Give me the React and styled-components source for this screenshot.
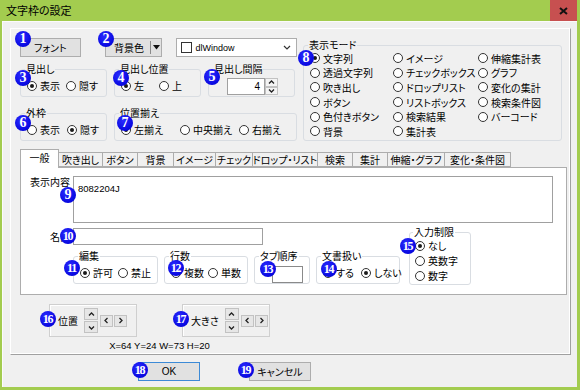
import React from "react";
import styled, { createGlobalStyle } from "styled-components";

const GlobalStyle = createGlobalStyle`
  html, body { margin:0; padding:0; }
  body {
    width:580px; height:390px; overflow:hidden;
    font-family:"Noto Sans CJK JP", "Noto Sans", sans-serif;
    font-size:10px; color:#000;
    font-feature-settings:"palt";
  }
  * { box-sizing:border-box; }
`

const Window = styled.div`
  width:580px;
  height:390px;
  background:#a3cc4f;
  display:flex;
  flex-direction:column;
  padding:0 3px 3px 2px;
`
const TitleBar = styled.div`
  height:21px;
  flex-shrink:0;
  display:flex;
  align-items:center;
  justify-content:space-between;
`
const Title = styled.span`
  padding-left:4px;
  font-size:11px;
  line-height:21px;
`
const CloseBtn = styled.div`
  width:27px;
  height:21px;
  background:#c75050;
  display:flex;
  align-items:center;
  justify-content:center;
`
const Client = styled.div`
  flex:1;
  background:#f0f0f0;
  padding:7px 6px 0 8px;
  box-shadow:inset 1px 1px 0 #fbfbfb;
  display:flex;
  flex-direction:column;
`
const Panel = styled.div`
  height:327px;
  border:1px solid;
  border-color:#fff #a0a0a0 #a0a0a0 #fff;
  box-shadow:inset -1px -1px 0 #fff;
  padding:9px 4px 0 9px;
`
const TopSection = styled.div`
  position:relative;
  display:flex;
  gap:6px;
`
const LeftCol = styled.div`
  width:277px;
  display:flex;
  flex-direction:column;
`
const Row = styled.div`
  display:flex;
  gap:${p => p.$gap || 7}px;
  margin-top:${p => p.$mt || 0}px;
  align-items:${p => p.$align || "stretch"};
`
const Btn = styled.div`
  width:${p => p.$w}px;
  height:19px;
  background:#e1e1e1;
  border:1px solid ${p => (p.$def ? "#3c8ad6" : "#adadad")};
  display:flex;
  align-items:center;
  justify-content:center;
  font-family:${p => (p.$latin ? '"Liberation Sans", sans-serif' : "inherit")};
  line-height:1;
`
const SplitBtn = styled.div`
  width:59px;
  height:19px;
  background:#e1e1e1;
  border:1px solid #adadad;
  display:flex;
`
const SplitMain = styled.span`
  flex:1;
  display:flex;
  align-items:center;
  justify-content:center;
  padding-left:2px;
`
const SplitArrow = styled.span`
  width:11px;
  border-left:1px solid #8a8a8a;
  margin:2px 0;
  display:flex;
  align-items:center;
  justify-content:center;
`
const Combo = styled.div`
  width:123px;
  height:19px;
  background:#fff;
  border:1px solid #adadad;
  display:flex;
  align-items:center;
  padding:0 5px 0 4px;
  gap:3px;
`
const Swatch = styled.span`
  width:11px;
  height:11px;
  border:1px solid #333;
  background:#fff;
`
const ComboText = styled.span`
  flex:1;
  font-family:"Liberation Sans", sans-serif;
  font-size:9px;
`
const Group = styled.fieldset`
  margin:0;
  min-width:0;
  width:${p => p.$w}px;
  height:${p => p.$h || 34}px;
  border:1px solid #d9dde2;
  border-radius:3px;
  padding:0 ${p => p.$px ?? 6}px 0 ${p => p.$pl ?? 6}px;
  display:flex;
  flex-direction:${p => p.$dir || "row"};
  align-items:${p => p.$ai || "center"};
  position:relative;
`
const Legend = styled.legend`
  padding:0 1px;
  margin-left:-2px;
  line-height:12px;
`
const Item = styled.span`
  display:inline-flex;
  align-items:center;
  gap:3px;
  white-space:nowrap;
  min-width:${p => p.$w || 0}px;
  height:${p => p.$h || 14}px;
`
const Dot = styled.span`
  width:10px;
  height:10px;
  border-radius:50%;
  border:1px solid #333;
  background:#fff;
  position:relative;
  flex-shrink:0;
  &::after {
    content:"";
    position:absolute;
    left:2px;
    top:2px;
    width:4px;
    height:4px;
    border-radius:50%;
    background:${p => (p.$on ? "#1a1a1a" : "transparent")};
  }
`
const ModeGrid = styled.div`
  display:grid;
  grid-template-columns:83px 85px 1fr;
  grid-template-rows:repeat(6, 14.6px);
  grid-auto-flow:column;
  align-items:center;
  align-self:flex-start;
`
const NumBox = styled.div`
  display:flex;
  margin-left:12px;
  margin-top:2px;
`
const NumInput = styled.div`
  width:38px;
  height:17px;
  background:#fff;
  border:1px solid #a0a0a0;
  text-align:right;
  padding-right:4px;
  font-family:"Liberation Sans", sans-serif;
  font-size:10px;
  line-height:15px;
`
const SpinCol = styled.div`
  display:flex;
  flex-direction:column;
  gap:${p => p.$gap || 0}px;
`
const SpinBtn = styled.div`
  width:${p => p.$w || 13}px;
  height:${p => p.$h || 8.5}px;
  background:${p => p.$bg || "#f4f4f4"};
  border:1px solid #c2c2c2;
  display:flex;
  align-items:center;
  justify-content:center;
`
const TabStrip = styled.div`
  display:flex;
  align-items:flex-end;
  height:18px;
  margin-top:8px;
`
const Tab = styled.div`
  width:${p => p.$w + 1}px;
  height:${p => (p.$on ? 19 : 15)}px;
  margin-right:-1px;
  margin-bottom:${p => (p.$on ? -1 : 0)}px;
  background:${p => (p.$on ? "#fff" : "#f0f0f0")};
  border:1px solid #adadad;
  border-bottom:${p => (p.$on ? "none" : "1px solid #adadad")};
  position:relative;
  z-index:${p => (p.$on ? 2 : 1)};
  display:flex;
  align-items:${p => (p.$on ? "flex-start" : "center")};
  padding-top:${p => (p.$on ? 2 : 0)}px;
  justify-content:center;
  white-space:nowrap;
  line-height:12px;
`
const TabBody = styled.div`
  position:relative;
  width:547px;
  height:128px;
  background:#fff;
  border:1px solid #adadad;
  padding-top:8px;
`
const FieldRow = styled.div`
  display:grid;
  grid-template-columns:49px ${p => p.$w}px;
  column-gap:3px;
  align-items:${p => p.$ai || "start"};
`
const FieldLabel = styled.span`
  text-align:right;
  line-height:12px;
`
const TextBox = styled.div`
  height:${p => p.$h}px;
  background:#fff;
  border:1px solid #a0a0a0;
  padding:6px 4px;
  font-family:"Liberation Sans", sans-serif;
  font-size:9.5px;
  line-height:11px;
`
const Lower = styled.div`
  display:flex;
  align-items:flex-end;
  margin-top:3px;
`
const LowerLeft = styled.div`
  width:379px;
  display:flex;
  flex-direction:column;
`
const SmallInput = styled.div`
  width:31px;
  height:17px;
  background:#fff;
  border:1px solid #8a8a8a;
  margin:4px 0 0 11px;
`
const PosArea = styled.div`
  width:221px;
  margin:9px 0 0 29px;
  display:flex;
  flex-direction:column;
  align-items:center;
`
const PosRow = styled.div`
  position:relative;
  width:100%;
  display:flex;
  gap:45px;
`
const PosBox = styled.div`
  width:88px;
  height:33px;
  border:1px solid #cfcfcf;
  box-shadow:inset 1px 1px 0 #fff;
  display:flex;
  align-items:center;
  padding-left:8px;
  gap:6px;
`
const Arrows = styled.div`
  display:flex;
  align-items:center;
  gap:2px;
`
const Info = styled.div`
  margin-top:3px;
  font-family:"Liberation Sans", sans-serif;
  font-size:9.5px;
  line-height:12px;
`
const Footer = styled.div`
  position:relative;
  display:flex;
  gap:49px;
  margin-top:7px;
  padding-left:128px;
`
const Badge = styled.span`
  position:absolute;
  left:${p => p.$x}px;
  top:${p => p.$y}px;
  width:16px;
  height:16px;
  border-radius:50%;
  background:radial-gradient(circle at 40% 35%, #2b2bff 0%, #0808e0 70%, #0000b8 100%);
  color:#fff;
  font-family:"Liberation Serif", serif;
  font-weight:bold;
  font-size:${p => (p.$n > 9 ? 12 : 14)}px;
  letter-spacing:${p => (p.$n > 9 ? -1.2 : 0)}px;
  display:flex;
  align-items:center;
  justify-content:center;
  line-height:1;
  z-index:10;
  padding-right:${p => (p.$n > 9 ? 1 : 0)}px;
`

const Mark = ({ n, x, y }) => <Badge $n={n} $x={x} $y={y}>{n}</Badge>

const Radio = ({ on, w, h, children }) => (
  <Item $w={w} $h={h}>
    <Dot $on={on} />
    {children}
  </Item>
)

const Chev = ({ dir }) => {
  const pts = {
    up: "1,4.5 3.5,2 6,4.5",
    down: "1,2.5 3.5,5 6,2.5",
    left: "4.5,1 2,3.5 4.5,6",
    right: "2.5,1 5,3.5 2.5,6",
  }[dir]
  return (
    <svg width="7" height="7" viewBox="0 0 7 7">
      <polyline points={pts} fill="none" stroke="#222" strokeWidth="1.3" />
    </svg>
  )
}

const NudgeButtons = () => (
  <Arrows>
    <SpinCol $gap={1}>
      <SpinBtn $w={14} $h={12} $bg="#e6e6e6"><Chev dir="up" /></SpinBtn>
      <SpinBtn $w={14} $h={12} $bg="#e6e6e6"><Chev dir="down" /></SpinBtn>
    </SpinCol>
    <SpinBtn $w={13} $h={12} $bg="#e6e6e6"><Chev dir="left" /></SpinBtn>
    <SpinBtn $w={13} $h={12} $bg="#e6e6e6" style={{ marginLeft: -1 }}><Chev dir="right" /></SpinBtn>
  </Arrows>
)

const modes = [
  "文字列", "透過文字列", "吹き出し", "ボタン", "色付きボタン", "背景",
  "イメージ", "チェックボックス", "ドロップリスト", "リストボックス", "検索結果", "集計表",
  "伸縮集計表", "グラフ", "変化の集計", "検索条件図", "バーコード",
]

const tabs = [
  ["一般", 38], ["吹き出し", 44], ["ボタン", 35], ["背景", 36], ["イメージ", 42],
  ["チェック", 37], ["ドロップ・リスト", 65], ["検索", 35], ["集計", 35],
  ["伸縮・グラフ", 57], ["変化・条件図", 66],
]

export default function App() {
  return (
    <>
      <GlobalStyle />
      <Window>
        <TitleBar>
          <Title>文字枠の設定</Title>
          <CloseBtn>
            <svg width="9" height="8" viewBox="0 0 9 8">
              <path d="M1 1 L8 7 M8 1 L1 7" stroke="#111" strokeWidth="2" />
            </svg>
          </CloseBtn>
        </TitleBar>
        <Client>
          <Panel>
            <TopSection>
              <LeftCol>
                <Row $gap={0}>
                  <Btn $w={62}>フォント</Btn>
                  <SplitBtn style={{ marginLeft: 17 }}>
                    <SplitMain>背景色</SplitMain>
                    <SplitArrow>
                      <svg width="7" height="5" viewBox="0 0 7 5"><path d="M0 0 H7 L3.5 4.5 Z" fill="#111" /></svg>
                    </SplitArrow>
                  </SplitBtn>
                  <Combo style={{ marginLeft: 7 }}>
                    <Swatch />
                    <ComboText>dlWindow</ComboText>
                    <svg width="8" height="5" viewBox="0 0 8 5"><polyline points="1,1 4,4 7,1" fill="none" stroke="#333" strokeWidth="1.2" /></svg>
                  </Combo>
                </Row>
                <Row $mt={6}>
                  <Group $w={87}>
                    <Legend>見出し</Legend>
                    <Radio on w={39}>表示</Radio>
                    <Radio>隠す</Radio>
                  </Group>
                  <Group $w={87}>
                    <Legend>見出し位置</Legend>
                    <Radio on w={38}>左</Radio>
                    <Radio>上</Radio>
                  </Group>
                  <Group $w={87}>
                    <Legend>見出し間隔</Legend>
                    <NumBox>
                      <NumInput>4</NumInput>
                      <SpinCol>
                        <SpinBtn><Chev dir="up" /></SpinBtn>
                        <SpinBtn><Chev dir="down" /></SpinBtn>
                      </SpinCol>
                    </NumBox>
                  </Group>
                </Row>
                <Row $mt={10}>
                  <Group $w={87}>
                    <Legend>外枠</Legend>
                    <Radio w={40}>表示</Radio>
                    <Radio on>隠す</Radio>
                  </Group>
                  <Group $w={183}>
                    <Legend>位置揃え</Legend>
                    <Radio on w={59}>左揃え</Radio>
                    <Radio w={59}>中央揃え</Radio>
                    <Radio>右揃え</Radio>
                  </Group>
                </Row>
              </LeftCol>
              <Group $w={259} $h={102} $ai="flex-start" style={{ marginTop: 1 }}>
                <Legend>表示モード</Legend>
                <ModeGrid>
                  {modes.map((m, i) => (
                    <Radio key={m} on={i === 0}>{m}</Radio>
                  ))}
                </ModeGrid>
              </Group>
              <Mark n={1} x={-5} y={-7} />
              <Mark n={2} x={78} y={-7} />
              <Mark n={3} x={-5} y={32} />
              <Mark n={4} x={93} y={32} />
              <Mark n={5} x={184} y={31} />
              <Mark n={6} x={-5} y={77} />
              <Mark n={7} x={97} y={77} />
              <Mark n={8} x={278} y={12} />
            </TopSection>

            <TabStrip>
              {tabs.map(([t, w], i) => (
                <Tab key={t} $w={w} $on={i === 0}>{t}</Tab>
              ))}
            </TabStrip>
            <TabBody>
              <FieldRow $w={480}>
                <FieldLabel>表示内容</FieldLabel>
                <TextBox $h={47}>8082204J</TextBox>
              </FieldRow>
              <Lower>
                <LowerLeft>
                  <FieldRow $w={190} $ai="center">
                    <FieldLabel>名前</FieldLabel>
                    <TextBox $h={17} />
                  </FieldRow>
                  <Row $mt={5} $gap={6} style={{ marginLeft: 52 }}>
                    <Group $w={85}>
                      <Legend>編集</Legend>
                      <Radio on w={38}>許可</Radio>
                      <Radio>禁止</Radio>
                    </Group>
                    <Group $w={84}>
                      <Legend>行数</Legend>
                      <Radio on w={37}>複数</Radio>
                      <Radio>単数</Radio>
                    </Group>
                    <Group $w={56}>
                      <Legend>タブ順序</Legend>
                      <SmallInput />
                    </Group>
                    <Group $w={84}>
                      <Legend>文書扱い</Legend>
                      <Radio w={38}>する</Radio>
                      <Radio on>しない</Radio>
                    </Group>
                  </Row>
                </LowerLeft>
                <Group $w={62} $h={59} $dir="column" $ai="flex-start" $pl={5} style={{ marginLeft: 9, marginBottom: -1 }}>
                  <Legend>入力制限</Legend>
                  <Radio on h={15}>なし</Radio>
                  <Radio h={15}>英数字</Radio>
                  <Radio h={15}>数字</Radio>
                </Group>
              </Lower>
              <Mark n={9} x={39} y={19} />
              <Mark n={10} x={39} y={60} />
              <Mark n={11} x={43} y={92} />
              <Mark n={12} x={147} y={92} />
              <Mark n={13} x={239} y={93} />
              <Mark n={14} x={300} y={93} />
              <Mark n={15} x={379} y={70} />
            </TabBody>

            <PosArea>
              <PosRow>
                <PosBox>
                  <span>位置</span>
                  <NudgeButtons />
                </PosBox>
                <PosBox>
                  <span>大きさ</span>
                  <NudgeButtons />
                </PosBox>
                <Mark n={16} x={-9} y={7} />
                <Mark n={17} x={124} y={7} />
              </PosRow>
              <Info>X=64 Y=24 W=73 H=20</Info>
            </PosArea>
          </Panel>
          <Footer>
            <Btn $w={62} $def $latin>OK</Btn>
            <Btn $w={62}>キャンセル</Btn>
            <Mark n={18} x={122} y={0} />
            <Mark n={19} x={228} y={0} />
          </Footer>
        </Client>
      </Window>
    </>
  )
}
